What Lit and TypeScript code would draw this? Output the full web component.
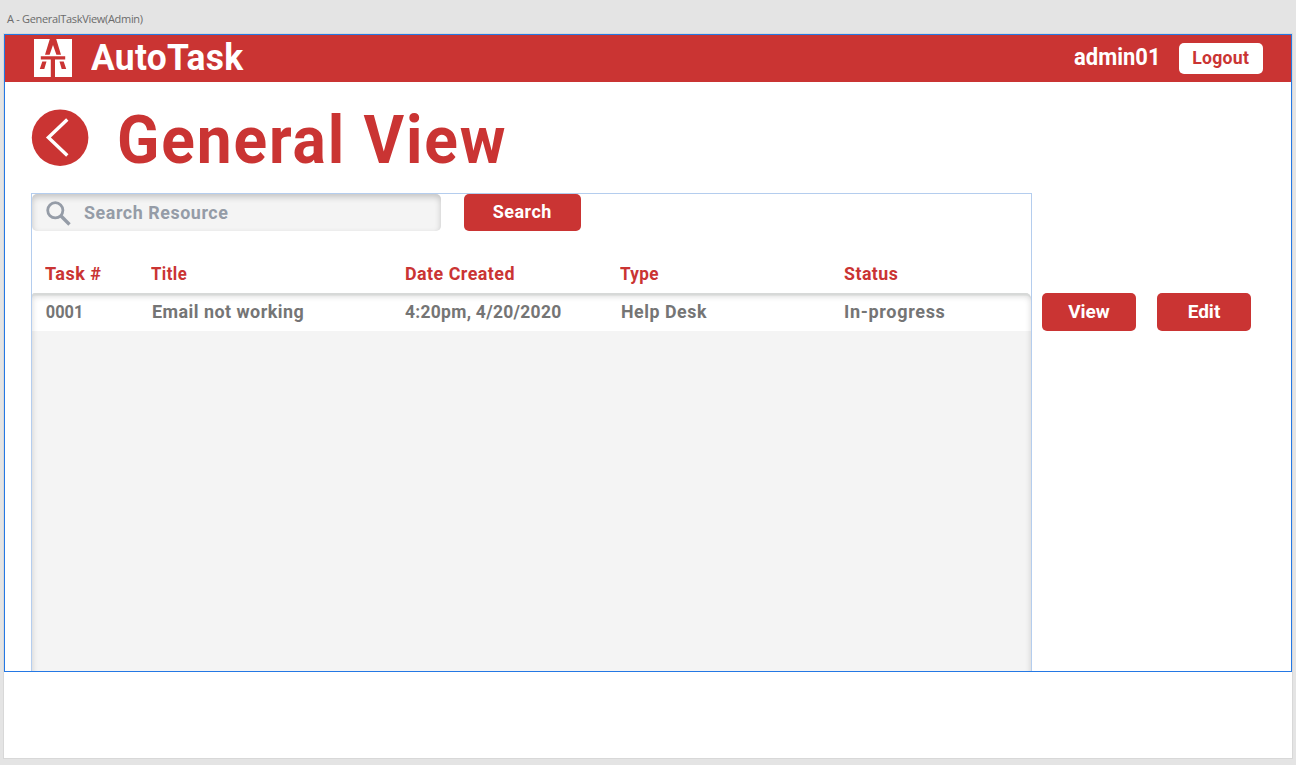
import { LitElement, html, css } from "lit";
import { customElement, property } from "lit/decorators.js";

interface Task {
  id: string;
  title: string;
  created: string;
  type: string;
  status: string;
}

@customElement("at-button")
class AtButton extends LitElement {
  static styles = css`
    :host {
      display: flex;
      align-items: center;
      justify-content: center;
      box-sizing: border-box;
      height: 38px;
      padding-bottom: 2px;
      border-radius: 5px;
      background: #ca3433;
      color: #fff;
      font: 700 19px/1 Roboto, sans-serif;
      white-space: nowrap;
    }
  `;
  render() {
    return html`<slot></slot>`;
  }
}

@customElement("task-list")
class TaskList extends LitElement {
  @property({ attribute: false }) tasks: Task[] = [];

  static styles = css`
    :host {
      display: flex;
      flex-direction: column;
      flex: 1;
    }
    .row {
      display: grid;
      grid-template-columns: 106px 254px 215px 224px 1fr;
      padding-left: 13px;
      line-height: 38px;
      height: 38px;
      white-space: nowrap;
    }
    .row span {
      display: inline-block;
      transform-origin: 0 50%;
    }
    .head {
      color: #ca3433;
      margin-top: 24px;
    }
    .body {
      position: relative;
      flex: 1;
      border-radius: 0 5px 0 0;
      background: #f4f4f4;
      overflow: hidden;
    }
    .body::after {
      content: "";
      position: absolute;
      inset: 0 0 -12px 0;
      border-radius: 3px 5px 5px 5px;
      box-shadow: inset 0 2.5px 0.5px #d7d9d8, inset 0 3px 6px rgba(0, 0, 0, 0.16);
    }
    .item {
      background: #fff;
      color: #757575;
    }
    .h0 { letter-spacing: 0.5px; transform: scaleX(0.95); }
    .h1 { letter-spacing: 0.5px; transform: scaleX(0.88); }
    .h2 { letter-spacing: 0.5px; transform: scaleX(0.94); }
    .h3 { letter-spacing: 0.4px; transform: scaleX(0.9); }
    .h4 { letter-spacing: 0.5px; transform: scaleX(0.935); }
    .c0 { letter-spacing: 0; transform: scaleX(0.86); padding-left: 1px; }
    .c1 { letter-spacing: 0.5px; transform: scaleX(0.943); padding-left: 1px; }
    .c2 { letter-spacing: 0.3px; transform: scaleX(0.92); }
    .c3 { letter-spacing: 0.6px; transform: scaleX(0.935); padding-left: 1px; }
    .c4 { letter-spacing: 0.7px; transform: scaleX(0.95); }
  `;
  render() {
    const heads = ["Task #", "Title", "Date Created", "Type", "Status"];
    return html`
      <div class="row head">
        ${heads.map((h, i) => html`<div><span class="h${i}">${h}</span></div>`)}
      </div>
      <div class="body">
        ${this.tasks.map(
          (t) => html`<div class="row item">
            ${[t.id, t.title, t.created, t.type, t.status].map(
              (v, i) => html`<div><span class="c${i}">${v}</span></div>`
            )}
          </div>`
        )}
      </div>
    `;
  }
}

@customElement("app-root")
class AppRoot extends LitElement {
  private tasks: Task[] = [
    {
      id: "0001",
      title: "Email not working",
      created: "4:20pm, 4/20/2020",
      type: "Help Desk",
      status: "In-progress",
    },
  ];

  static styles = css`
    :host {
      display: flex;
      flex-direction: column;
      box-sizing: border-box;
      width: 1296px;
      height: 765px;
      padding: 0 4px 7px;
      background: #e4e4e4;
      font: 700 19px/1 Roboto, sans-serif;
    }
    .label {
      height: 34px;
      padding: 5px 0 0 3px;
      box-sizing: border-box;
      font: 400 11px/28px "Open Sans", sans-serif;
      letter-spacing: -0.31px;
      color: #6b6b6b;
    }
    .board {
      flex: 1;
      box-sizing: border-box;
      background: #fff;
      box-shadow: 0 0 0 1px #d8d8d8;
    }
    .frame {
      box-sizing: border-box;
      display: flex;
      flex-direction: column;
      height: 638px;
      border: 1px solid #2478e4;
    }
    .top {
      display: flex;
      align-items: center;
      height: 47px;
      padding: 0 28px 0 29px;
      background: #ca3433;
      color: #fff;
    }
    .logo {
      display: block;
      margin-bottom: 1px;
    }
    .brand {
      margin: 0 0 2px 19px;
      font-size: 37px;
      letter-spacing: 0.3px;
      transform: scaleX(0.956);
      transform-origin: 0 50%;
    }
    .user {
      margin: 0 18px 2px auto;
      font-size: 23.5px;
      transform: scaleX(0.934);
      transform-origin: 100% 50%;
    }
    .logout {
      width: 84px;
      height: 31px;
      margin-bottom: 1px;
      padding-bottom: 1px;
      background: #fff;
      color: #ca3433;
    }
    .logout span {
      letter-spacing: 0.3px;
      transform: scaleX(0.93);
    }
    .title {
      display: flex;
      align-items: center;
      height: 111px;
      padding-left: 26px;
      gap: 28px;
    }
    .title h1 {
      margin: 7px 0 0;
      font: 700 66px/1 Roboto, sans-serif;
      letter-spacing: 2px;
      color: #ca3433;
      transform: scaleX(0.942);
      transform-origin: 0 50%;
    }
    .content {
      flex: 1;
      display: flex;
      padding-left: 26px;
    }
    .panel {
      display: flex;
      flex-direction: column;
      box-sizing: border-box;
      width: 1001px;
      border: 1px solid #b4cdee;
      border-bottom: 0;
    }
    .search {
      display: flex;
      gap: 23px;
    }
    .field {
      display: flex;
      align-items: center;
      box-sizing: border-box;
      width: 409px;
      height: 37px;
      padding-left: 14px;
      gap: 13px;
      border-radius: 5px;
      background: #f4f4f4;
      box-shadow: inset 0 3px 6px rgba(0, 0, 0, 0.2);
      color: #959ca7;
    }
    .field svg {
      margin-top: 2px;
    }
    .go {
      width: 117px;
      height: 37px;
    }
    .actions {
      display: flex;
      gap: 21px;
      padding: 100px 0 0 10px;
    }
    .act {
      width: 94px;
    }
    .t-search {
      letter-spacing: 0.6px;
      transform: scaleX(0.94);
      transform-origin: 0 50%;
    }
    .t-go {
      letter-spacing: 0.5px;
      transform: scaleX(0.945);
    }
  `;

  render() {
    return html`
      <div class="label">A - GeneralTaskView(Admin)</div>
      <div class="board">
        <div class="frame">
          <header class="top">
            <svg class="logo" width="38" height="38" viewBox="0 0 38 38">
              <rect width="38" height="38" fill="#fff" />
              <g fill="#ca3433">
                <path d="M15.8 0h6.4L27 15.7h-4.6L19 6l-3.4 9.7H11z" />
                <path d="M6.8 17.2h24.4v3.3H21V38h-4.2V20.5h-10z" />
                <path d="M8.3 22.5h4.2L10.3 30H5.8zM25.5 22.5h4.2l2.5 7.5h-4.5z" />
              </g>
            </svg>
            <span class="brand">AutoTask</span>
            <span class="user">admin01</span>
            <at-button class="logout"><span>Logout</span></at-button>
          </header>
          <div class="title">
            <svg width="58" height="58" viewBox="0 0 58 58">
              <circle cx="29.1" cy="28.7" r="28.3" fill="#ca3433" />
              <path d="M36.3 10.5 17.4 28.5l18.9 18" fill="none" stroke="#fff" stroke-width="3.4" />
            </svg>
            <h1>General View</h1>
          </div>
          <div class="content">
            <section class="panel">
              <div class="search">
                <div class="field">
                  <svg width="25" height="25" viewBox="0 0 25 25" fill="none" stroke="#959ca7">
                    <circle cx="9.3" cy="9.3" r="7.6" stroke-width="2.8" />
                    <path d="M14.8 14.8 23.5 23.5" stroke-width="3.4" />
                  </svg>
                  <span class="t-search">Search Resource</span>
                </div>
                <at-button class="go"><span class="t-go">Search</span></at-button>
              </div>
              <task-list .tasks=${this.tasks}></task-list>
            </section>
            <div class="actions">
              <at-button class="act">View</at-button>
              <at-button class="act">Edit</at-button>
            </div>
          </div>
        </div>
      </div>
    `;
  }
}
